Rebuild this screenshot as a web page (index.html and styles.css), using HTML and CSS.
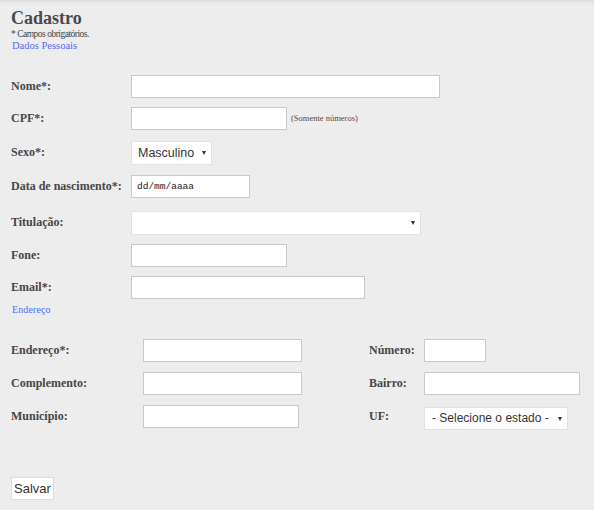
FILE: index.html
```html
<!DOCTYPE html>
<html lang="pt">
<head>
<meta charset="utf-8">
<title>Cadastro</title>
<link rel="stylesheet" href="styles.css">
</head>
<body>
<div class="page">
  <h1 class="title">Cadastro</h1>
  <p class="note">* Campos obrigatórios.</p>
  <a class="section-link" href="#">Dados Pessoais</a>

  <form class="form">
    <div class="personal">
      <div class="row h32">
        <label class="lbl">Nome*:</label>
        <input class="field w-nome" type="text">
      </div>
      <div class="row h34">
        <label class="lbl">CPF*:</label>
        <input class="field w-156" type="text">
        <span class="hint">(Somente números)</span>
      </div>
      <div class="row h34">
        <label class="lbl tall">Sexo*:</label>
        <span class="sel w-sexo">
          <select class="select"><option>Masculino</option><option>Feminino</option></select>
        </span>
      </div>
      <div class="row h36">
        <label class="lbl">Data de nascimento*:</label>
        <input class="field w-data mono" type="text" value="dd/mm/aaaa">
      </div>
      <div class="row h33">
        <label class="lbl tall">Titulação:</label>
        <span class="sel w-tit">
          <select class="select"><option></option></select>
        </span>
      </div>
      <div class="row h32">
        <label class="lbl">Fone:</label>
        <input class="field w-156" type="text">
      </div>
      <div class="row">
        <label class="lbl">Email*:</label>
        <input class="field w-email" type="text">
      </div>
    </div>

    <a class="section-link addr-link" href="#">Endereço</a>

    <div class="address">
      <label class="lbl">Endereço*:</label>
      <input class="field w-159" type="text">
      <label class="lbl">Número:</label>
      <input class="field w-num" type="text">

      <label class="lbl">Complemento:</label>
      <input class="field w-159" type="text">
      <label class="lbl">Bairro:</label>
      <input class="field w-156" type="text">

      <label class="lbl">Município:</label>
      <input class="field w-156" type="text">
      <label class="lbl">UF:</label>
      <span class="sel w-uf">
        <select class="select"><option>- Selecione o estado -</option></select>
      </span>
    </div>

    <button class="btn" type="button">Salvar</button>
  </form>
</div>
</body>
</html>
```

FILE: styles.css
```css
html, body {
  margin: 0;
  padding: 0;
}

body {
  background: linear-gradient(#d9d9d9 0, #e8e8e8 3px, #ededed 6px, #ededed 100%);
  min-height: 510px;
  font-family: "Liberation Serif", "Times New Roman", serif;
  color: #454545;
}

.page {
  padding: 8px 11px 0 11px;
}

.title {
  margin: 0;
  font-size: 18px;
  line-height: 20px;
  font-weight: bold;
  color: #4a4a4a;
}

.note {
  margin: 0;
  font-size: 9.5px;
  line-height: 12px;
  letter-spacing: -0.5px;
  color: #444;
}

.section-link {
  display: block;
  font-size: 10.5px;
  line-height: 12px;
  color: #4d6bff;
  text-decoration: none;
  padding-left: 1px;
}

.form {
  margin: 0;
}

.personal {
  display: flex;
  flex-direction: column;
  margin-top: 23px;
}

.row {
  display: flex;
  align-items: flex-start;
}

.h32 { height: 32px; }
.h33 { height: 33px; }
.h34 { height: 34px; }
.h36 { height: 36px; }

.lbl {
  font-size: 12px;
  font-weight: bold;
  color: #474747;
  line-height: 23px;
  white-space: nowrap;
}

.personal .lbl {
  width: 120px;
  flex: none;
}

.lbl.tall {
  line-height: 22px;
}

.field {
  box-sizing: border-box;
  height: 23px;
  margin: 0;
  padding: 0 4px;
  border: 1px solid #c9c9c9;
  background: #fff;
  font-family: "Liberation Sans", Arial, sans-serif;
  font-size: 13px;
  color: #333;
  outline: none;
}

.mono {
  font-family: "Liberation Mono", "DejaVu Sans Mono", monospace;
  font-size: 9.5px;
  color: #222;
  padding-left: 5px;
}

.hint {
  font-size: 8.5px;
  line-height: 23px;
  color: #5a4a40;
  margin-left: 4px;
}

.w-nome { width: 309px; }
.w-156 { width: 156px; }
.w-159 { width: 159px; }
.w-data { width: 119px; }
.w-email { width: 234px; }
.w-num { width: 62px; }

.sel {
  position: relative;
  display: inline-block;
  height: 24px;
}

.sel::after {
  content: "";
  position: absolute;
  right: 6px;
  top: 10px;
  border-left: 2.5px solid transparent;
  border-right: 2.5px solid transparent;
  border-top: 4px solid #333;
  pointer-events: none;
}

.select {
  -webkit-appearance: none;
  appearance: none;
  box-sizing: border-box;
  width: 100%;
  height: 100%;
  margin: 0;
  padding: 0 6px 0 6px;
  border: 1px solid #e2e2e2;
  border-radius: 0;
  background: #fff;
  font-family: "Liberation Sans", Arial, sans-serif;
  font-size: 12.5px;
  color: #333;
  outline: none;
}

.w-sexo { width: 81px; }
.w-tit { width: 290px; height: 24px; }
.w-uf { width: 144px; height: 23px; }

.w-uf .select {
  padding-left: 7px;
  font-size: 12px;
}

.addr-link {
  margin-top: 5px;
  font-size: 10px;
  letter-spacing: 0.1px;
}

.address {
  display: grid;
  grid-template-columns: 132px 226px 55px auto;
  grid-auto-rows: 23px;
  row-gap: 10px;
  align-items: center;
  justify-items: start;
  margin-top: 23px;
}

.address .w-uf {
  margin-top: 3px;
}

.btn {
  display: block;
  margin-top: 49px;
  box-sizing: border-box;
  width: 43px;
  height: 23px;
  padding: 0;
  border: 1px solid #dcdcdc;
  border-radius: 0;
  background: #fff;
  font-family: "Liberation Sans", Arial, sans-serif;
  font-size: 13px;
  color: #333;
}
```
